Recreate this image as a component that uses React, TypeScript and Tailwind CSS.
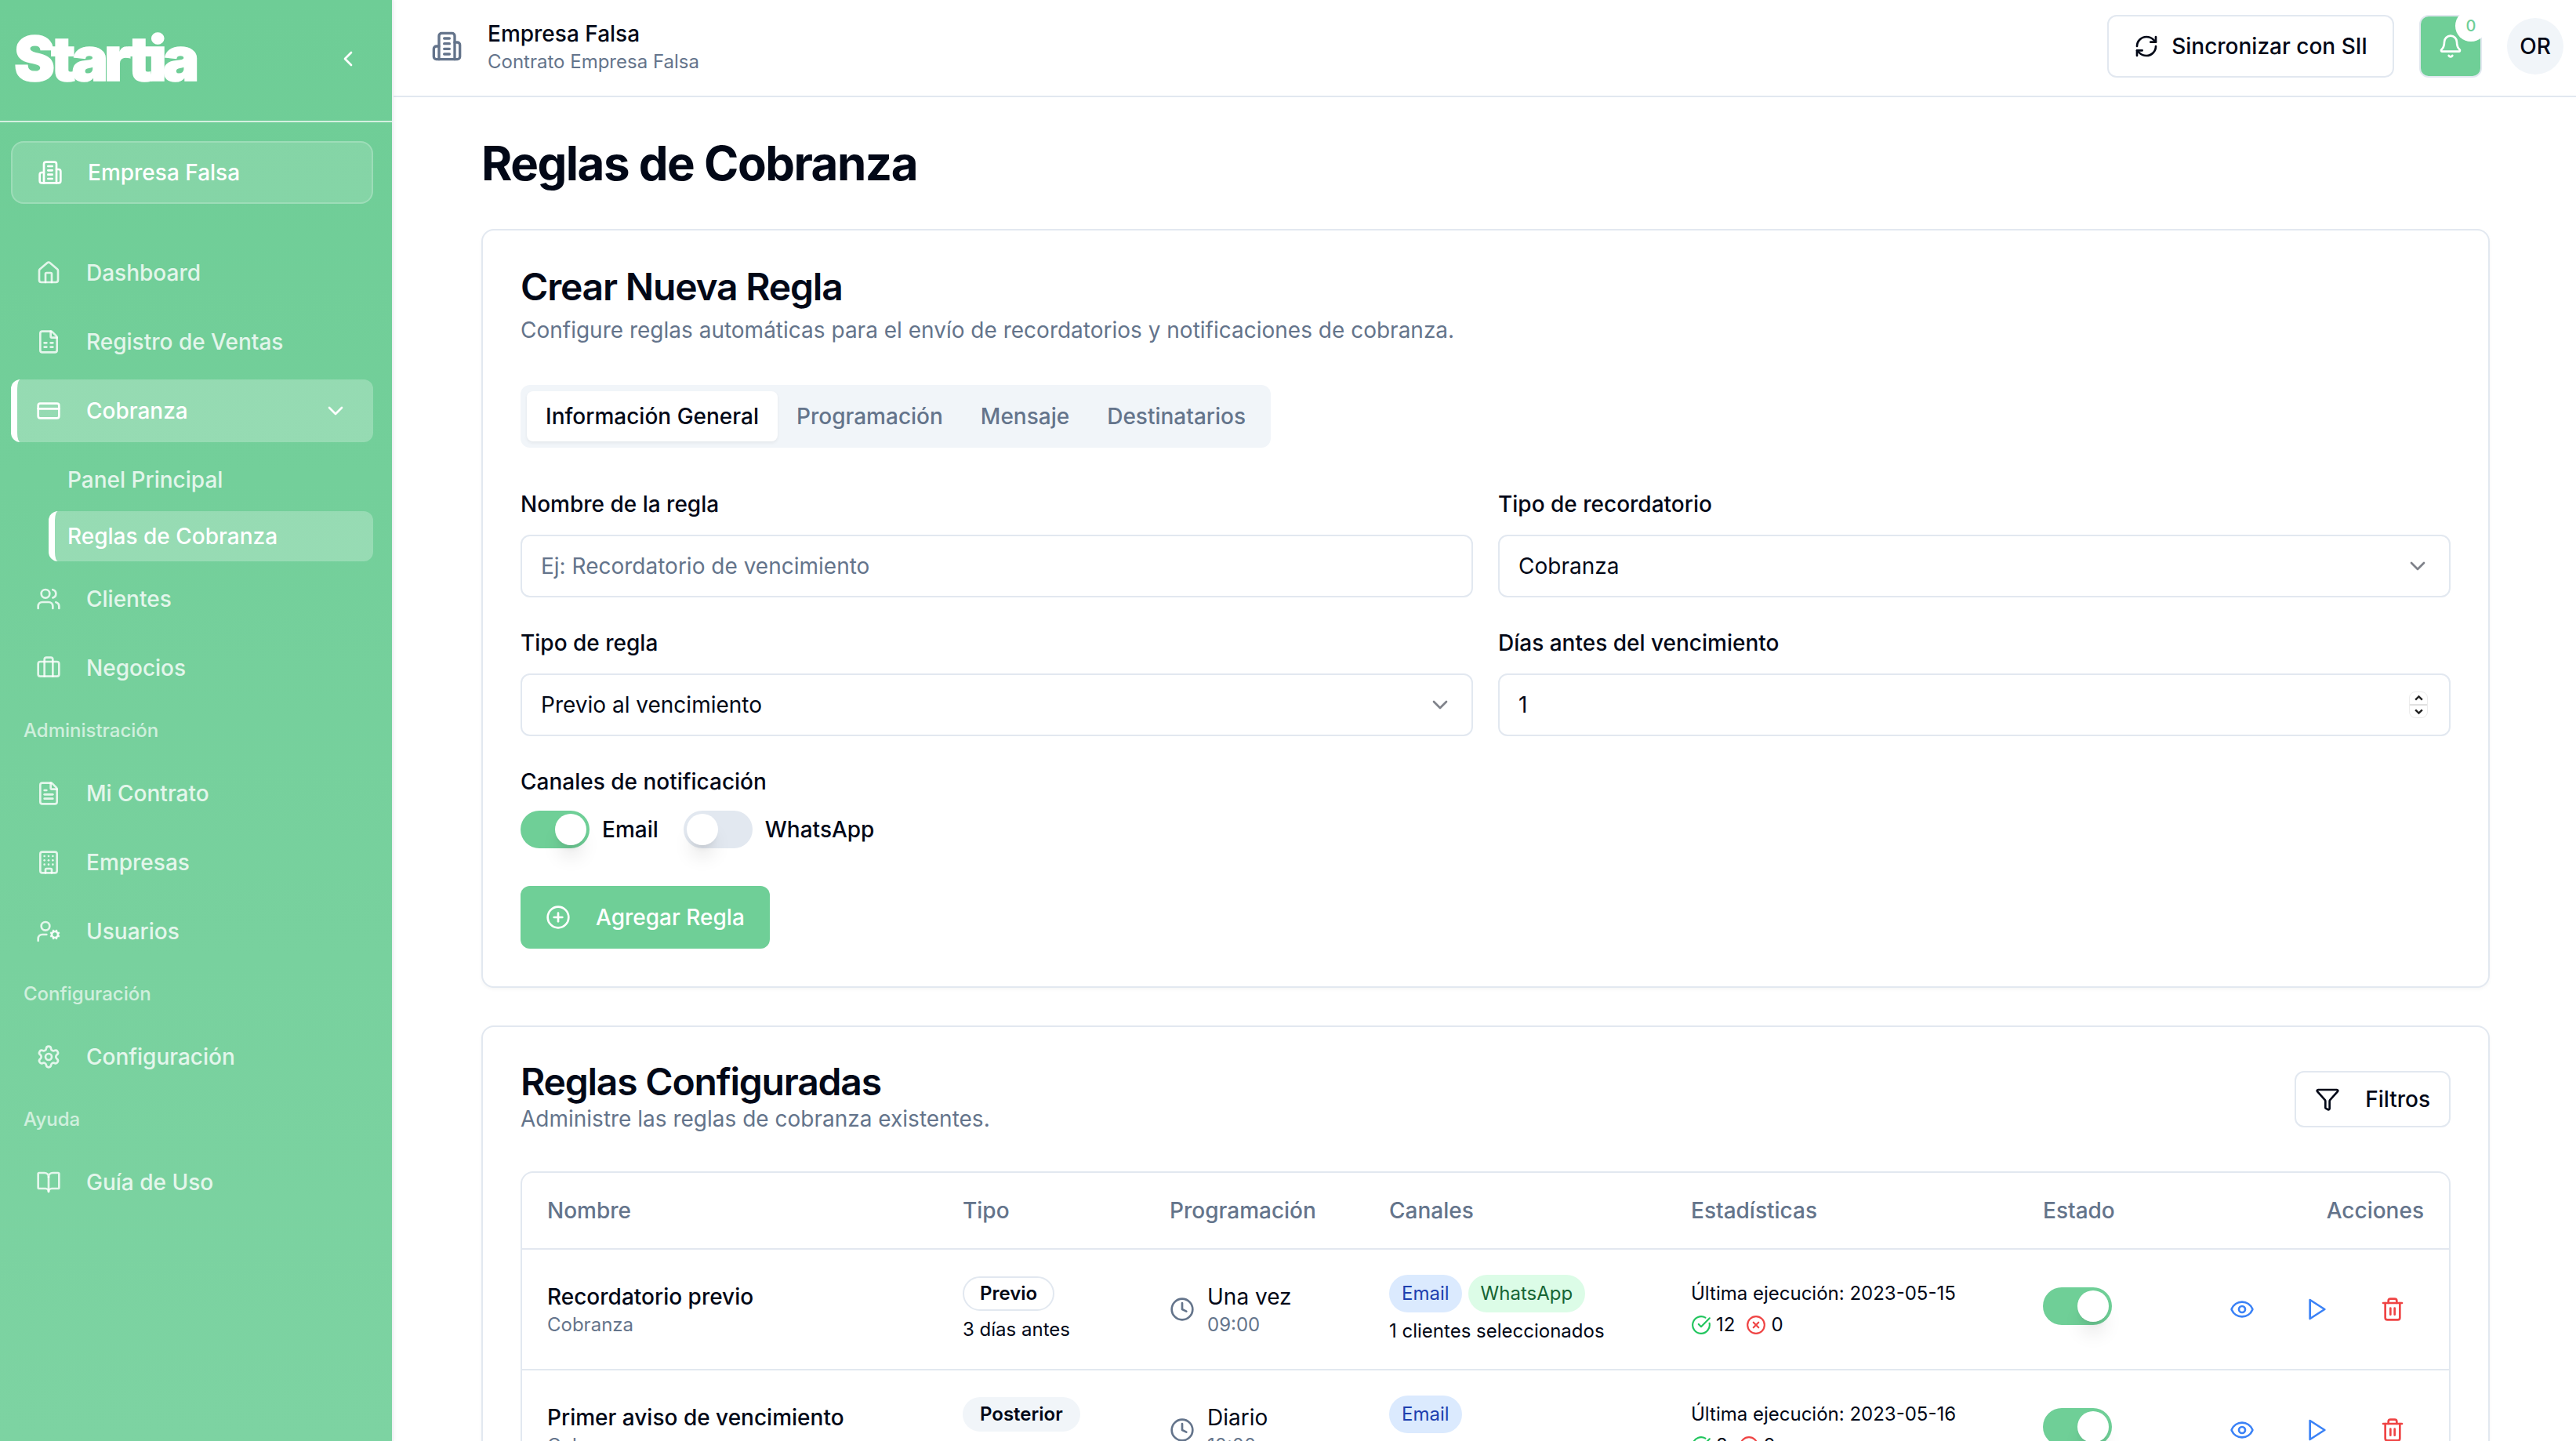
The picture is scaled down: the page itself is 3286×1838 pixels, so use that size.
import type { ReactNode } from 'react';
import {
  BookOpen,
  Briefcase,
  Bell,
  Building,
  CheckCircle,
  ChevronDown,
  ChevronLeft,
  CirclePlus,
  Clock,
  CreditCard,
  Eye,
  FileSpreadsheet,
  FileText,
  Filter,
  Home,
  RefreshCw,
  Settings,
  Trash2,
  UserCog,
  Users,
  XCircle,
} from 'lucide-react';

const BuildingIcon = ({ className }: { className?: string }) => (
  <svg
    viewBox="0 0 24 24"
    fill="none"
    stroke="currentColor"
    strokeWidth="2"
    strokeLinecap="round"
    strokeLinejoin="round"
    className={className}
  >
    <path d="M6 22V4a2 2 0 0 1 2-2h8a2 2 0 0 1 2 2v18Z" />
    <path d="M6 12H4a2 2 0 0 0-2 2v6a2 2 0 0 0 2 2h2" />
    <path d="M18 9h2a2 2 0 0 1 2 2v9a2 2 0 0 1-2 2h-2" />
    <path d="M10 6h4" />
    <path d="M10 10h4" />
    <path d="M10 14h4" />
    <path d="M10 18h4" />
  </svg>
);

const PlayIcon = ({ className }: { className?: string }) => (
  <svg
    viewBox="0 0 24 24"
    fill="none"
    stroke="currentColor"
    strokeWidth="2"
    strokeLinecap="round"
    strokeLinejoin="round"
    className={className}
  >
    <polygon points="5 3 19 12 5 21 5 3" />
  </svg>
);

type NavItemProps = {
  icon: ReactNode;
  label: string;
  active?: boolean;
  trailing?: ReactNode;
};

const NavItem = ({ icon, label, active = false, trailing }: NavItemProps) => (
  <div
    className={`flex h-[80px] items-center gap-[32px] rounded-[12px] pr-[32px] text-[28px] font-medium ${
      active
        ? 'border-l-[8px] border-white bg-white/25 pl-[24px] text-white'
        : 'pl-[32px] text-white/80'
    }`}
  >
    {icon}
    <span className="flex-1">{label}</span>
    {trailing}
  </div>
);

const NavLabel = ({ children }: { children: ReactNode }) => (
  <div className="flex h-[64px] items-center pl-[16px] text-[24px] font-medium text-white/65">
    {children}
  </div>
);

const iconClass = 'h-[32px] w-[32px] shrink-0';

const Sidebar = () => (
  <aside className="z-10 flex h-full w-[502px] shrink-0 flex-col border-r-2 border-[#eef1f4] bg-linear-to-b from-[#6ecd96] to-[#7dd3a2] shadow-[2px_0_4px_rgba(0,0,0,0.03)]">
    <div className="flex h-[156px] shrink-0 items-center justify-between border-b-2 border-white/70 pr-[40px] pb-[4px] pl-[18px]">
      <span className="text-[78px] leading-none font-black tracking-[-5px] text-white [-webkit-text-stroke:1.5px_white]">
        Startia
      </span>
      <ChevronLeft className="h-[32px] w-[32px] text-white" />
    </div>
    <div className="mt-[24px] mr-[24px] ml-[14px] flex h-[80px] items-center gap-[32px] rounded-[16px] border-2 border-white/20 bg-white/15 pl-[32px] text-[28px] font-medium text-white">
      <BuildingIcon className={iconClass} />
      Empresa Falsa
    </div>
    <nav className="mt-[48px] mr-[24px] ml-[14px] flex flex-col gap-[8px]">
      <NavItem icon={<Home className={iconClass} />} label="Dashboard" />
      <NavItem icon={<FileSpreadsheet className={iconClass} />} label="Registro de Ventas" />
      <NavItem
        active
        icon={<CreditCard className={iconClass} />}
        label="Cobranza"
        trailing={<ChevronDown className={iconClass} />}
      />
      <div className="mt-[8px] flex h-[64px] items-center pl-[72px] text-[28px] font-medium text-white/80">
        Panel Principal
      </div>
      <div className="ml-[48px] flex h-[64px] items-center rounded-[12px] border-l-[8px] border-white bg-white/25 pl-[16px] text-[28px] font-medium text-white">
        Reglas de Cobranza
      </div>
      <NavItem icon={<Users className={iconClass} />} label="Clientes" />
      <NavItem icon={<Briefcase className={iconClass} />} label="Negocios" />
      <NavLabel>Administración</NavLabel>
      <NavItem icon={<FileText className={iconClass} />} label="Mi Contrato" />
      <NavItem icon={<Building className={iconClass} />} label="Empresas" />
      <NavItem icon={<UserCog className={iconClass} />} label="Usuarios" />
      <NavLabel>Configuración</NavLabel>
      <NavItem icon={<Settings className={iconClass} />} label="Configuración" />
      <NavLabel>Ayuda</NavLabel>
      <NavItem icon={<BookOpen className={iconClass} />} label="Guía de Uso" />
    </nav>
  </aside>
);

const Topbar = () => (
  <header className="flex h-[124px] shrink-0 items-center border-b-2 border-[#e2e8f0] pr-[16px] pb-[4px] pl-[48px]">
    <BuildingIcon className="h-[40px] w-[40px] text-[#64748b]" />
    <div className="ml-[32px] flex flex-col">
      <span className="text-[28px] leading-[40px] font-medium text-[#020817]">
        Empresa Falsa
      </span>
      <span className="text-[24px] leading-[32px] text-[#64748b]">
        Contrato Empresa Falsa
      </span>
    </div>
    <div className="ml-auto flex items-center gap-[32px]">
      <button
        type="button"
        className="flex h-[80px] items-center gap-[16px] rounded-[12px] border-2 border-[#e2e8f0] bg-white px-[32px] text-[28px] font-medium text-[#020817]"
      >
        <RefreshCw className={iconClass} />
        Sincronizar con SII
      </button>
      <button
        type="button"
        className="relative flex h-[80px] w-[80px] items-center justify-center rounded-[12px] border-2 border-[#e2e8f0] bg-[#6fcf97] text-white"
      >
        <Bell className={iconClass} />
        <span className="absolute top-[-8px] right-[-8px] flex h-[40px] w-[40px] items-center justify-center rounded-full bg-white text-[20px] font-medium text-[#6fcf97]">
          0
        </span>
      </button>
      <div className="flex h-[72px] w-[72px] items-center justify-center rounded-full bg-[#f1f5f9] text-[28px] font-medium text-[#020817]">
        OR
      </div>
    </div>
  </header>
);

const Field = ({ label, children }: { label: string; children: ReactNode }) => (
  <div className="flex flex-col gap-[19px]">
    <label className="text-[28px] leading-[40px] font-medium text-[#020817]">{label}</label>
    {children}
  </div>
);

const SelectBox = ({ value }: { value: string }) => (
  <div className="flex h-[80px] items-center justify-between rounded-[12px] border-2 border-[#e2e8f0] bg-white px-[24px] text-[28px] text-[#020817]">
    {value}
    <ChevronDown className="h-[32px] w-[32px] opacity-50" />
  </div>
);

const Toggle = ({ on = false }: { on?: boolean }) => (
  <div
    className={`flex h-[48px] w-[88px] shrink-0 items-center rounded-full p-[4px] ${
      on ? 'justify-end bg-[#6fcf97]' : 'justify-start bg-[#e2e8f0]'
    }`}
  >
    <div className="h-[40px] w-[40px] rounded-full bg-white shadow-[0_20px_25px_-5px_rgba(0,0,0,0.1),0_8px_10px_-6px_rgba(0,0,0,0.1)]" />
  </div>
);

const tabs = ['Información General', 'Programación', 'Mensaje', 'Destinatarios'];

const CreateRuleCard = () => (
  <section className="rounded-[16px] border-2 border-[#e2e8f0] bg-white px-[48px] pt-[44px] pb-[48px] shadow-[0_2px_4px_rgba(0,0,0,0.04)]">
    <h2 className="text-[48px] leading-[56px] font-semibold tracking-[-1.2px] text-[#020817]">
      Crear Nueva Regla
    </h2>
    <p className="mt-[7px] text-[28px] leading-[40px] text-[#64748b]">
      Configure reglas automáticas para el envío de recordatorios y notificaciones de cobranza.
    </p>
    <div className="mt-[50px] flex h-[80px] w-fit items-center rounded-[12px] bg-[#f1f5f9] p-[8px] text-[28px] font-medium text-[#64748b]">
      {tabs.map((tab, index) => (
        <div
          key={tab}
          className={`flex h-[64px] items-center rounded-[8px] px-[24px] ${
            index === 0 ? 'bg-white text-[#020817] shadow-[0_2px_4px_rgba(0,0,0,0.06)]' : ''
          }`}
        >
          {tab}
        </div>
      ))}
    </div>
    <div className="mt-[52px] grid grid-cols-2 gap-x-[32px] gap-y-[38px]">
      <Field label="Nombre de la regla">
        <input
          placeholder="Ej: Recordatorio de vencimiento"
          className="h-[80px] rounded-[12px] border-2 border-[#e2e8f0] bg-white px-[24px] text-[28px] text-[#020817] placeholder:text-[#64748b]"
        />
      </Field>
      <Field label="Tipo de recordatorio">
        <SelectBox value="Cobranza" />
      </Field>
      <Field label="Tipo de regla">
        <SelectBox value="Previo al vencimiento" />
      </Field>
      <Field label="Días antes del vencimiento">
        <div className="flex h-[80px] items-center justify-between rounded-[12px] border-2 border-[#e2e8f0] bg-white pr-[27px] pl-[24px] text-[28px] text-[#020817]">
          1
          <div className="flex h-[34px] w-[24px] flex-col rounded-[8px] border border-[#ececec] text-[#222]">
            <div className="flex flex-1 items-center justify-center border-b-2 border-[#e0e0e0]">
              <svg viewBox="0 0 12 8" className="h-[9px] w-[13px]" fill="none" stroke="currentColor" strokeWidth="2.2">
                <path d="M2 6 6 2l4 4" />
              </svg>
            </div>
            <div className="flex flex-1 items-center justify-center">
              <svg viewBox="0 0 12 8" className="h-[9px] w-[13px]" fill="none" stroke="currentColor" strokeWidth="2.2">
                <path d="M2 2l4 4 4-4" />
              </svg>
            </div>
          </div>
        </div>
      </Field>
    </div>
    <div className="mt-[38px] text-[28px] leading-[40px] font-medium text-[#020817]">
      Canales de notificación
    </div>
    <div className="mt-[17px] flex items-center text-[28px] font-medium text-[#020817]">
      <Toggle on />
      <span className="ml-[16px]">Email</span>
      <div className="ml-[32px]">
        <Toggle />
      </div>
      <span className="ml-[16px]">WhatsApp</span>
    </div>
    <button
      type="button"
      className="mt-[48px] flex h-[80px] items-center gap-[32px] rounded-[12px] bg-[#6fcf97] px-[32px] text-[28px] font-medium text-white"
    >
      <CirclePlus className={iconClass} />
      Agregar Regla
    </button>
  </section>
);

const gridCols = 'grid grid-cols-[530px_264px_280px_385px_449px_210px_1fr] items-center';
const cellClass = 'px-[32px]';

const Chip = ({ label, tone }: { label: string; tone: 'blue' | 'green' }) => (
  <span
    className={`flex h-[48px] items-center rounded-full px-[16px] text-[24px] ${
      tone === 'blue' ? 'bg-[#dbeafe] text-[#1e40af]' : 'bg-[#dcfce7] text-[#166534]'
    }`}
  >
    {label}
  </span>
);

type Rule = {
  name: string;
  category: string;
  type: string;
  outlined: boolean;
  timing: string;
  schedule: string;
  time: string;
  channels: ('Email' | 'WhatsApp')[];
  selection: string;
  lastRun: string;
  ok: number;
  failed: number;
};

const rules: Rule[] = [
  {
    name: 'Recordatorio previo',
    category: 'Cobranza',
    type: 'Previo',
    outlined: true,
    timing: '3 días antes',
    schedule: 'Una vez',
    time: '09:00',
    channels: ['Email', 'WhatsApp'],
    selection: '1 clientes seleccionados',
    lastRun: '2023-05-15',
    ok: 12,
    failed: 0,
  },
  {
    name: 'Primer aviso de vencimiento',
    category: 'Cobranza',
    type: 'Posterior',
    outlined: false,
    timing: '1 día después',
    schedule: 'Diario',
    time: '10:00',
    channels: ['Email'],
    selection: 'Todos los clientes',
    lastRun: '2023-05-16',
    ok: 8,
    failed: 2,
  },
];

const RuleRow = ({ rule }: { rule: Rule }) => (
  <div className={`${gridCols} h-[154px] shrink-0 border-b-2 border-[#e2e8f0]`}>
    <div className={cellClass}>
      <div className="text-[28px] leading-[40px] font-medium text-[#020817]">{rule.name}</div>
      <div className="text-[24px] leading-[32px] text-[#64748b]">{rule.category}</div>
    </div>
    <div className={`${cellClass} flex flex-col items-start gap-[8px]`}>
      <span
        className={`flex h-[44px] items-center rounded-full border-2 px-[20px] text-[24px] font-semibold text-[#020817] ${
          rule.outlined ? 'border-[#e2e8f0]' : 'border-transparent bg-[#f1f5f9]'
        }`}
      >
        {rule.type}
      </span>
      <span className="text-[24px] leading-[32px] text-[#020817]">{rule.timing}</span>
    </div>
    <div className={`${cellClass} flex items-center gap-[16px]`}>
      <Clock className="h-[32px] w-[32px] text-[#64748b]" />
      <div>
        <div className="text-[28px] leading-[40px] text-[#020817]">{rule.schedule}</div>
        <div className="text-[24px] leading-[32px] text-[#64748b]">{rule.time}</div>
      </div>
    </div>
    <div className={`${cellClass} flex flex-col gap-[8px]`}>
      <div className="flex gap-[8px]">
        {rule.channels.map((channel) => (
          <Chip key={channel} label={channel} tone={channel === 'Email' ? 'blue' : 'green'} />
        ))}
      </div>
      <span className="text-[24px] leading-[32px] text-[#020817]">{rule.selection}</span>
    </div>
    <div className={`${cellClass} flex flex-col gap-[8px] text-[24px] leading-[32px] text-[#020817]`}>
      <span>Última ejecución: {rule.lastRun}</span>
      <div className="flex items-center">
        <CheckCircle className="h-[26px] w-[26px] text-[#22c55e]" />
        <span className="ml-[6px]">{rule.ok}</span>
        <XCircle className="ml-[14px] h-[26px] w-[26px] text-[#ef4444]" />
        <span className="ml-[6px]">{rule.failed}</span>
      </div>
    </div>
    <div className={`${cellClass} mb-[8px]`}>
      <Toggle on />
    </div>
    <div className={`${cellClass} flex justify-end gap-[16px]`}>
      <div className="flex h-[80px] w-[80px] items-center justify-center text-[#3b82f6]">
        <Eye className={iconClass} />
      </div>
      <div className="flex h-[80px] w-[80px] items-center justify-center text-[#3b82f6]">
        <PlayIcon className={iconClass} />
      </div>
      <div className="flex h-[80px] w-[80px] items-center justify-center text-[#ef4444]">
        <Trash2 className={iconClass} />
      </div>
    </div>
  </div>
);

const RulesCard = () => (
  <section className="mt-[48px] rounded-[16px] border-2 border-[#e2e8f0] bg-white px-[48px] pt-[43px] shadow-[0_2px_4px_rgba(0,0,0,0.04)]">
    <div className="flex items-center justify-between">
      <div>
        <h2 className="text-[48px] leading-[54px] font-semibold tracking-[-1.2px] text-[#020817]">
          Reglas Configuradas
        </h2>
        <p className="text-[28px] leading-[40px] text-[#64748b]">
          Administre las reglas de cobranza existentes.
        </p>
      </div>
      <button
        type="button"
        className="mt-[4px] flex h-[72px] items-center gap-[32px] rounded-[12px] border-2 border-[#e2e8f0] bg-white px-[24px] text-[28px] font-medium text-[#020817]"
      >
        <Filter className={iconClass} />
        Filtros
      </button>
    </div>
    <div className="mt-[47px] rounded-[16px] border-2 border-[#e2e8f0]">
      <div className={`${gridCols} h-[98px] border-b-2 border-[#e2e8f0] text-[28px] font-medium text-[#64748b]`}>
        <div className={cellClass}>Nombre</div>
        <div className={cellClass}>Tipo</div>
        <div className={cellClass}>Programación</div>
        <div className={cellClass}>Canales</div>
        <div className={cellClass}>Estadísticas</div>
        <div className={cellClass}>Estado</div>
        <div className={`${cellClass} text-right`}>Acciones</div>
      </div>
      {rules.map((rule) => (
        <RuleRow key={rule.name} rule={rule} />
      ))}
    </div>
  </section>
);

const App = () => (
  <div className="flex h-screen w-screen overflow-hidden bg-white font-['Inter',sans-serif]">
    <Sidebar />
    <div className="flex min-w-0 flex-1 flex-col">
      <Topbar />
      <main className="min-h-0 flex-1 overflow-hidden pt-[48px] pr-[110px] pl-[112px]">
        <h1 className="mb-[48px] text-[60px] leading-[72px] font-bold tracking-[-1.5px] text-[#020817]">
          Reglas de Cobranza
        </h1>
        <CreateRuleCard />
        <RulesCard />
      </main>
    </div>
  </div>
);

export default App;
